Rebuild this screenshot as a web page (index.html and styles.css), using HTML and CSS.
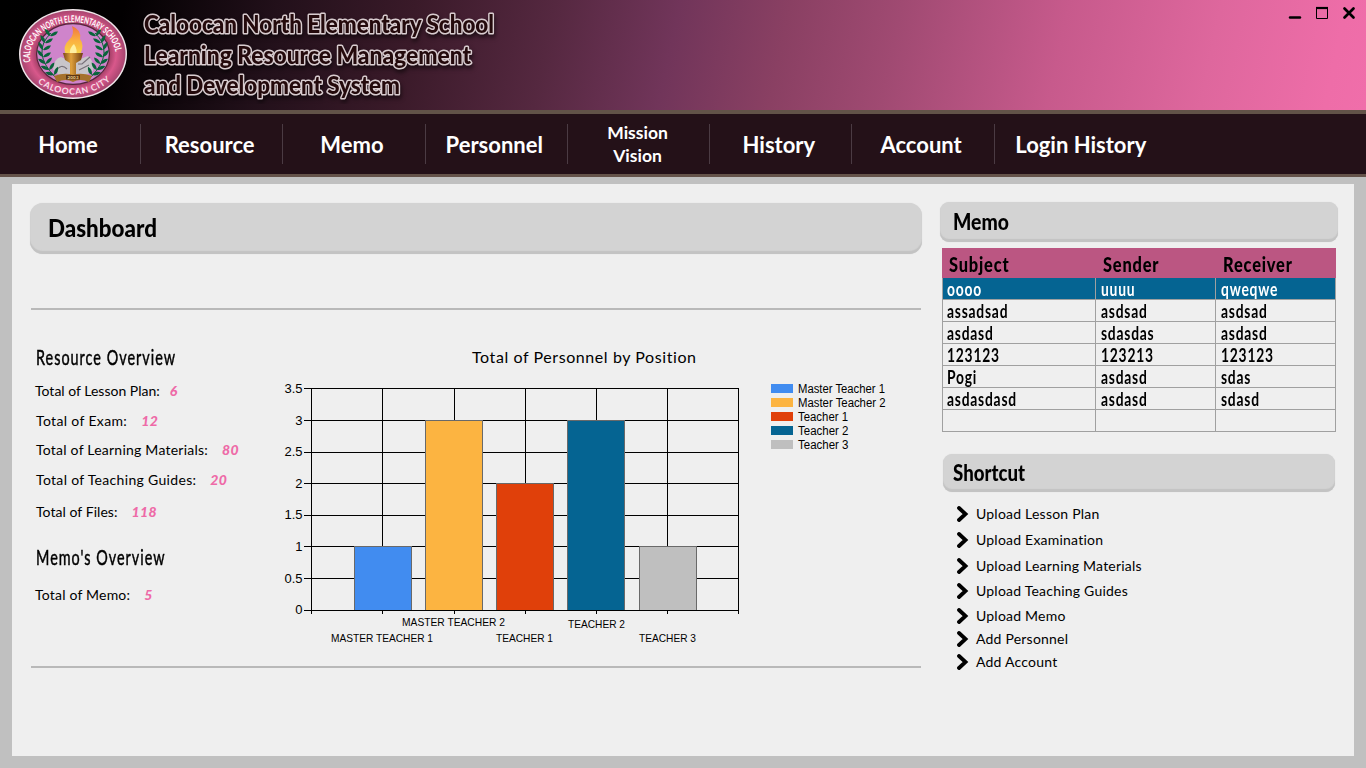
FILE: index.html
```html
<!DOCTYPE html>
<html lang="en">
<head>
<meta charset="utf-8">
<title>Learning Resource Management and Development System</title>
<link rel="stylesheet" href="styles.css">
</head>
<body>
<header class="banner">
  <svg class="seal" width="112" height="94" viewBox="-56 -47 112 94">
    <defs>
      <radialGradient id="ring"><stop offset=".6" stop-color="#7d2c4c"/><stop offset=".82" stop-color="#d8588b"/><stop offset="1" stop-color="#a8456f"/></radialGradient>
      <linearGradient id="flame" x1="0" y1="0" x2="0" y2="1"><stop offset="0" stop-color="#ee7440"/><stop offset=".5" stop-color="#fbb040"/><stop offset="1" stop-color="#f6d84a"/></linearGradient>
      <linearGradient id="cup" x1="0" x2="1" y1="0" y2="0"><stop offset="0" stop-color="#7c4a14"/><stop offset=".4" stop-color="#e0a13c"/><stop offset="1" stop-color="#6d3d10"/></linearGradient>
      <path id="arcTop" d="M-42.500 8 A43 34.500 0 1 1 42.500 8"/>
      <path id="arcBottom" d="M-39 25 A52 46 0 0 0 39 25"/>
      <path id="leaf" d="M0 0 Q2.800-5 8-4.500 Q5.500 1 0 0Z"/>
    </defs>
    <ellipse rx="54" ry="45" fill="#f0e6ea"/>
    <ellipse rx="52.500" ry="43.500" fill="url(#ring)"/>
    <ellipse rx="37" ry="31" fill="#54253a"/>
    <ellipse rx="35.800" ry="29.800" fill="#cf84cb"/>
    <path d="M-20 16 Q-19 4-12 3 L-5 6 L5 6 L15 2 Q22 8 20 17 L8 24 L-10 24Z" fill="#c8c5ca"/>
    <path d="M-17 17 Q-12 9-6 15 M5 10 L9 10 L17 3 M6 16 L16 11" fill="none" stroke="#777179" stroke-width="1.200"/>
    <g fill="none" stroke="#0d6338" stroke-width="1"><path d="M-22-21 Q-42-2-18 23M22-21 Q42-2 18 23"/></g>
    <g id="branch" fill="#08643a">
      <g transform="translate(-23-18)"><use href="#leaf"/><use href="#leaf" transform="rotate(-95)"/></g>
      <g transform="translate(-28-11)"><use href="#leaf"/><use href="#leaf" transform="rotate(-90)"/></g>
      <g transform="translate(-30-4)"><use href="#leaf"/><use href="#leaf" transform="rotate(-90)"/></g>
      <g transform="translate(-30 3)"><use href="#leaf"/><use href="#leaf" transform="rotate(-100)"/></g>
      <g transform="translate(-27.500 10)"><use href="#leaf" transform="rotate(-15)"/><use href="#leaf" transform="rotate(-115)"/></g>
      <g transform="translate(-24 16)"><use href="#leaf" transform="rotate(-25)"/><use href="#leaf" transform="rotate(-125)"/></g>
      <g transform="translate(-19 21)"><use href="#leaf" transform="rotate(-35)"/><use href="#leaf" transform="rotate(-135)"/></g>
    </g>
    <use href="#branch" transform="scale(-1 1)"/>
    <path d="M-7 1 Q-11-8-4-14 Q2-19-1-28 Q9-24 7-15 Q12-9 7 1Z" fill="url(#flame)"/>
    <path d="M-3 1 Q-4-6 1-10 Q5-4 3 1Z" fill="#fff0a0"/>
    <path d="M-10-1 H10 L8 6 L3 9 V24 H-3 V9 L-8 6Z" fill="url(#cup)"/>
    <path d="M-19 22 Q-8 18 0 21 Q8 18 19 22 L16 28 Q7 24 0 28 Q-7 24-16 28Z" fill="#a5712c"/>
    <rect x="-7" y="21" width="14" height="4.500" fill="#5d3714"/>
    <text class="seal-year" x="-5.500" y="25.200" textLength="11">2003</text>
    <text class="seal-text"><textPath href="#arcTop" startOffset="0" textLength="122" lengthAdjust="spacingAndGlyphs">CALOOCAN NORTH ELEMENTARY SCHOOL</textPath></text>
    <text class="seal-text seal-city"><textPath href="#arcBottom" startOffset="5" textLength="79">CALOOCAN CITY</textPath></text>
  </svg>
  <svg class="system-name" width="370" height="104" viewBox="136 0 370 104">
    <text x="144" y="32.500" textLength="350" lengthAdjust="spacingAndGlyphs">Caloocan North Elementary School</text>
    <text x="144" y="63.500" textLength="327" lengthAdjust="spacingAndGlyphs">Learning Resource Management</text>
    <text x="144" y="93.500" textLength="256" lengthAdjust="spacingAndGlyphs">and Development System</text>
  </svg>
  <svg class="window-buttons" width="70" height="16" viewBox="1288 5 70 16">
    <path d="M1290 17.500H1300" stroke="#000" stroke-width="2.400" stroke-linecap="round"/>
    <path d="M1316.500 8V18.500H1327.500V8" fill="none" stroke="#000"/><path d="M1316 8H1328" stroke="#000" stroke-width="2.200"/>
    <path d="M1344.500 8.500L1353.500 17.500M1353.500 8.500L1344.500 17.500" stroke="#000" stroke-width="2.700" stroke-linecap="round"/>
  </svg>
</header>
<nav class="menu">
  <a class="menu-item first"><span>Home</span></a>
  <a class="menu-item"><span>Resource</span></a>
  <a class="menu-item"><span>Memo</span></a>
  <a class="menu-item"><span>Personnel</span></a>
  <a class="menu-item two-line"><span>Mission<br>Vision</span></a>
  <a class="menu-item"><span>History</span></a>
  <a class="menu-item"><span>Account</span></a>
  <a class="menu-item last"><span>Login History</span></a>
</nav>
<main class="panel">
  <section class="main-column">
    <h1 class="bar bar-dashboard"><span>Dashboard</span></h1>
    <div class="report">
      <div class="overview">
        <h2><span>Resource Overview</span></h2>
        <p class="stat lesson">Total of Lesson Plan:<b>6</b></p>
        <p class="stat exam">Total of Exam:<b>12</b></p>
        <p class="stat materials">Total of Learning Materials:<b>80</b></p>
        <p class="stat guides">Total of Teaching Guides:<b>20</b></p>
        <p class="stat files">Total of Files:<b>118</b></p>
        <h2 class="memo-overview"><span>Memo's Overview</span></h2>
        <p class="stat memos">Total of Memo:<b>5</b></p>
      </div>
      <svg class="chart" width="640" height="320" viewBox="270 340 640 320">
        <text class="chart-title" x="472" y="363" textLength="224">Total of Personnel by Position</text>
        <g shape-rendering="crispEdges">
          <path class="grid" d="M304 388.500H739M304 420.500H739M304 452.500H739M304 483.500H739M304 515.500H739M304 546.500H739M304 578.500H739M311.500 388V614M382.500 388V614M454.500 388V614M525.500 388V614M596.500 388V614M667.500 388V614M738.500 388V614"/>
          <g class="bars">
            <rect x="354.500" y="546.500" width="57" height="64" fill="#418cf0"/>
            <rect x="425.500" y="420.500" width="57" height="190" fill="#fcb441"/>
            <rect x="496.500" y="483.500" width="57" height="127" fill="#e0400a"/>
            <rect x="567.500" y="420.500" width="57" height="190" fill="#056492"/>
            <rect x="639.500" y="546.500" width="57" height="64" fill="#bfbfbf"/>
          </g>
          <path class="grid" d="M304 610.500H739"/>
        </g>
        <g class="y-labels">
          <text x="302.500" y="393">3.5</text><text x="302.500" y="425">3</text><text x="302.500" y="456">2.5</text><text x="302.500" y="488">2</text><text x="302.500" y="519">1.5</text><text x="302.500" y="551">1</text><text x="302.500" y="583">0.5</text><text x="302.500" y="614">0</text>
        </g>
        <g class="x-labels">
          <text x="331" y="642" textLength="102" lengthAdjust="spacingAndGlyphs">MASTER TEACHER 1</text>
          <text x="402" y="626" textLength="103" lengthAdjust="spacingAndGlyphs">MASTER TEACHER 2</text>
          <text x="496" y="642" textLength="57" lengthAdjust="spacingAndGlyphs">TEACHER 1</text>
          <text x="568" y="628" textLength="57" lengthAdjust="spacingAndGlyphs">TEACHER 2</text>
          <text x="639" y="642" textLength="57" lengthAdjust="spacingAndGlyphs">TEACHER 3</text>
        </g>
        <g class="legend">
          <rect x="771" y="384" width="22" height="9" fill="#418cf0"/><text x="798" y="393" textLength="87" lengthAdjust="spacingAndGlyphs">Master Teacher 1</text>
          <rect x="771" y="398" width="22" height="9" fill="#fcb441"/><text x="798" y="407" textLength="87.500" lengthAdjust="spacingAndGlyphs">Master Teacher 2</text>
          <rect x="771" y="412" width="22" height="9" fill="#e0400a"/><text x="798" y="421" textLength="50" lengthAdjust="spacingAndGlyphs">Teacher 1</text>
          <rect x="771" y="426" width="22" height="9" fill="#056492"/><text x="798" y="435" textLength="50.500" lengthAdjust="spacingAndGlyphs">Teacher 2</text>
          <rect x="771" y="440" width="22" height="9" fill="#bfbfbf"/><text x="798" y="449" textLength="50.500" lengthAdjust="spacingAndGlyphs">Teacher 3</text>
        </g>
      </svg>
    </div>
  </section>
  <aside class="side-column">
    <h2 class="bar bar-memo"><span>Memo</span></h2>
    <table class="memo-table">
      <thead><tr><th><span>Subject</span></th><th><span>Sender</span></th><th><span>Receiver</span></th></tr></thead>
      <tbody>
        <tr class="selected"><td><span>oooo</span></td><td><span>uuuu</span></td><td><span>qweqwe</span></td></tr>
        <tr><td><span>assadsad</span></td><td><span>asdsad</span></td><td><span>asdsad</span></td></tr>
        <tr><td><span>asdasd</span></td><td><span>sdasdas</span></td><td><span>asdasd</span></td></tr>
        <tr><td><span>123123</span></td><td><span>123213</span></td><td><span>123123</span></td></tr>
        <tr><td><span>Pogi</span></td><td><span>asdasd</span></td><td><span>sdas</span></td></tr>
        <tr><td><span>asdasdasd</span></td><td><span>asdasd</span></td><td><span>sdasd</span></td></tr>
        <tr><td></td><td></td><td></td></tr>
      </tbody>
    </table>
    <h2 class="bar bar-shortcut"><span>Shortcut</span></h2>
    <svg width="0" height="0" class="symbols"><symbol id="chevron" viewBox="0 0 12 16"><path d="M2 2L8.500 8L2 14" fill="none" stroke="#000" stroke-width="3.800" stroke-linecap="round"/></symbol></svg>
    <ul class="shortcuts">
      <li><svg width="12" height="16"><use href="#chevron"/></svg>Upload Lesson Plan</li>
      <li><svg width="12" height="16"><use href="#chevron"/></svg>Upload Examination</li>
      <li><svg width="12" height="16"><use href="#chevron"/></svg>Upload Learning Materials</li>
      <li class="h25"><svg width="12" height="16"><use href="#chevron"/></svg>Upload Teaching Guides</li>
      <li class="h24"><svg width="12" height="16"><use href="#chevron"/></svg>Upload Memo</li>
      <li class="h23"><svg width="12" height="16"><use href="#chevron"/></svg>Add Personnel</li>
      <li class="h23"><svg width="12" height="16"><use href="#chevron"/></svg>Add Account</li>
    </ul>
  </aside>
</main>
</body>
</html>
```
FILE: styles.css
```css
* { box-sizing: border-box; }
html, body { height: 100%; }
body { margin: 0; background: #c0c0c0; color: #000; font-family: Lato, sans-serif; font-variant-ligatures: none; overflow: hidden; }
h1, h2, p, ul { margin: 0; padding: 0; }

.banner { display: flex; align-items: flex-start; height: 110px; padding: 5px 8px 0 17px;
  background: linear-gradient(102deg, #000 0%, #020001 9%, #22101a 20%, #3a1a29 30%, #552840 40%, #71355a 49%, #8a4063 57%, #a04a72 65%, #c75a8c 77%, #de679d 88%, #ee6da8 97%, #f06eaa 100%); }
.seal { margin-top: 2px; }
.seal-text { font: 700 9.5px Lato, sans-serif; fill: #fff; }
.seal-city { font-size: 8.8px; fill: #f7dbe6; }
.seal-year { font: 700 4.5px Lato, sans-serif; fill: #f1d590; }
.system-name { margin: -5px 0 0 7px; }
.system-name text { font: 900 24px Lato, sans-serif; font-variant-ligatures: none; fill: #240a0c; stroke: #d8cccf; stroke-width: 3px; stroke-linejoin: round; paint-order: stroke; filter: drop-shadow(1px 3px 2px rgba(0, 0, 0, .55)); }
.window-buttons { margin-left: auto; }

.menu { display: flex; align-items: center; height: 67px; border-top: 4px solid #625348; border-bottom: 3px solid #65534a; background: #241118; }
.menu-item { display: flex; align-items: center; justify-content: center; width: 142.3px; height: 40px; padding-right: 4px; border-right: 1px solid #4b3b43; color: #fff; font-size: 22px; font-weight: 700; line-height: 23px; text-align: center; white-space: nowrap; }
.menu-item.first { width: 141px; }
.menu-item.last { width: 172px; padding: 0; border: 0; }
.menu-item.two-line { padding-right: 2px; font-size: 17.5px; }

.panel { display: grid; grid-template-columns: 892px 398px; column-gap: 18px; height: 572px; margin: 7px 12px 0; padding: 18px; background: #efefef; }
.bar { border-radius: 9px; background: #d3d3d3; box-shadow: inset 0 -3px 1px #c3c3c3, 0 0 1px #d0d0d0; }
.bar span, th span, td span, .overview h2 span { display: inline-block; transform-origin: 0 50%; white-space: nowrap; }

.bar-dashboard { height: 51px; margin-top: 1px; padding-left: 18px; border-radius: 13px; font-size: 25px; font-weight: 900; line-height: 49px; }
.bar-dashboard span { transform: scaleX(.895); }
.report { display: flex; height: 360px; margin: 54px 1px 0; border-top: 2px solid #b9b9b9; border-bottom: 2px solid #b9b9b9; }
.overview { width: 239px; padding: 35px 0 0 5px; }
.overview h2 { height: 24px; font-size: 21.5px; font-weight: 400; line-height: 24px; letter-spacing: 1.5px; -webkit-text-stroke: .5px #000; }
.overview h2 span { transform: scaleX(.67); }
.stat { display: flex; height: 20px; margin-top: 10px; font-size: 14px; line-height: 20px; white-space: nowrap; }
.stat b { margin-left: 14px; color: #ee6aa7; font-style: italic; font-weight: 900; letter-spacing: .4px; }
.stat.lesson { margin: 12px 0 0 -1px; }
.stat.lesson b { margin-left: 10px; }
.stat.exam { letter-spacing: .35px; }
.stat.materials { margin-top: 9px; letter-spacing: .23px; }
.stat.guides { letter-spacing: .32px; }
.stat.files { margin-top: 12px; letter-spacing: .05px; }
.overview h2.memo-overview { margin-top: 23px; }
.stat.memos { margin: 16px 0 0 -1px; letter-spacing: .2px; }

.chart { margin-top: 30px; font-family: "Liberation Sans", Arial, sans-serif; }
.chart-title { font: 400 16px Lato, sans-serif; font-variant-ligatures: none; }
.grid { stroke: #000; fill: none; }
.bars rect { stroke: #696969; }
.y-labels { font-size: 13px; text-anchor: end; }
.x-labels { font-size: 11px; }
.legend { font-size: 12px; }

.bar-memo { height: 40px; padding-left: 13px; font-size: 23px; font-weight: 900; line-height: 38px; }
.bar-memo span { transform: scaleX(.84); }
.memo-table { table-layout: fixed; width: 394px; margin: 6px 0 0 2px; border-spacing: 0; }
.memo-table th { width: 120px; height: 30px; padding: 2px 0 0 7px; background: #bb5682; font-size: 20px; font-weight: 900; line-height: 28px; text-align: left; letter-spacing: 1px; }
.memo-table th:first-child { width: 154px; }
th span { transform: scaleX(.82); }
.memo-table td { height: 22px; padding: 1px 0 0 5px; border-right: 1px solid #a0a0a0; border-bottom: 1px solid #a0a0a0; font-size: 18px; font-weight: 700; line-height: 20px; letter-spacing: 1px; overflow: hidden; }
.memo-table td:first-child { padding-left: 4px; border-left: 1px solid #a0a0a0; }
td span { transform: scaleX(.77); vertical-align: top; }
.selected td { background: #056492; color: #fff; }

.bar-shortcut { width: 392px; height: 38px; margin: 22px 0 0 3px; padding-left: 10px; font-size: 23px; font-weight: 900; line-height: 37px; }
.bar-shortcut span { transform: scaleX(.81); }
.symbols { display: block; }
.shortcuts { margin: 8px 0 0 17px; list-style: none; }
.shortcuts li { display: flex; align-items: center; height: 26px; font-size: 14px; letter-spacing: .22px; white-space: nowrap; }
.shortcuts li.h25 { height: 25px; }
.shortcuts li.h24 { height: 24px; }
.shortcuts li.h23 { height: 23px; }
.shortcuts svg { margin: 1px 7px 0 0; }
```
